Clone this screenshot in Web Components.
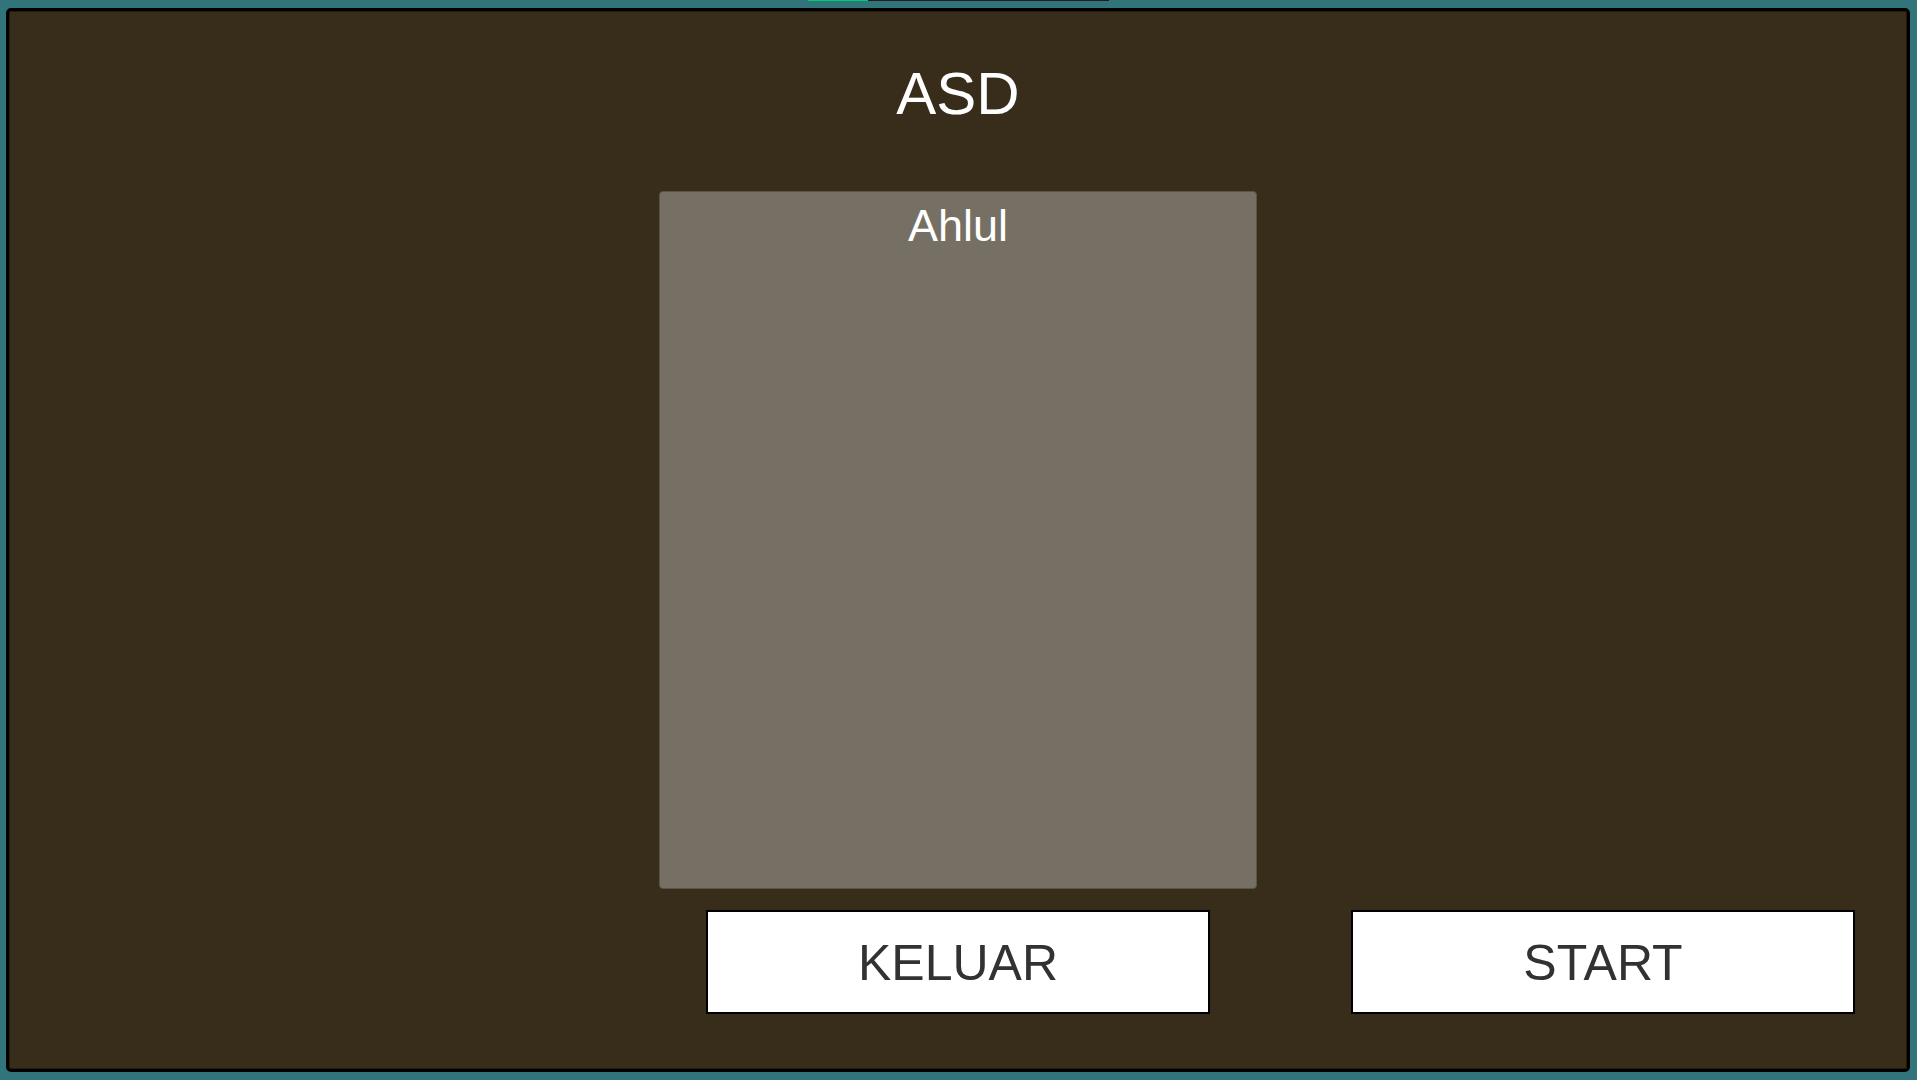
<!DOCTYPE html>
<html lang="id">
<head>
<meta charset="utf-8">
<meta name="viewport" content="width=device-width, initial-scale=1">
<title>Lobby</title>
<style>
html, body { margin: 0; }
body { background: #31747a; color: #fff; font-family: "Liberation Sans", Arial, sans-serif; }
</style>
</head>
<body>
<game-lobby>
  <load-bar slot="status"></load-bar>
  <span slot="title">ASD</span>
  <player-list>Ahlul</player-list>
  <game-button slot="leave">KELUAR</game-button>
  <game-button slot="start">START</game-button>
</game-lobby>
<script>
class Base extends HTMLElement {
  constructor() {
    super();
    this.attachShadow({ mode: "open" }).innerHTML = this.constructor.markup;
  }
}
customElements.define("load-bar", class extends Base {
  static markup = `<style>
    :host { display: block; width: 301px; height: 1px; background: #211e1f; margin: 0 auto; }
    div { width: 20%; height: 100%; background: #00cc6a; }
  </style><div></div>`;
});
customElements.define("player-list", class extends Base {
  static markup = `<style>
    :host { display: flex; flex: 1; width: 32%; min-width: 598px; box-sizing: border-box; border: 1px solid #5c5445; border-radius: 4px; background: #767064; }
    ul { flex: 1; list-style: none; margin: 0; padding: 9px 0; text-align: center; font-size: 45px; line-height: 50px; }
  </style><ul><li><slot></slot></li></ul>`;
});
customElements.define("game-button", class extends Base {
  static markup = `<style>
    :host { display: block; }
    button { display: block; width: 100%; height: 104px; margin: 0; padding: 1px 0 0; border: 2px solid #000; border-radius: 0; background: #fff; color: #323232; font: inherit; font-size: 50px; cursor: pointer; }
  </style><button type="button"><slot></slot></button>`;
});
customElements.define("game-lobby", class extends Base {
  static markup = `<style>
    :host { display: flex; flex-direction: column; box-sizing: border-box; min-height: 100vh; padding: 0 7px 8px 6px; }
    .status { height: 8px; }
    main { flex: 1; display: flex; flex-direction: column; align-items: center; border: 3px solid #000; border-radius: 5px; background: #382c1a; box-shadow: inset 0 0 0 1px #251c10; padding: 48px 52px 55px; }
    h1 { margin: 0 0 62px; font-size: 60px; line-height: 70px; font-weight: normal; }
    footer { align-self: stretch; display: grid; grid-template-columns: repeat(3, 1fr); column-gap: 141px; margin-top: 21px; }
    slot[name="leave"]::slotted(*) { grid-column: 2; }
    slot[name="start"]::slotted(*) { grid-column: 3; }
  </style>
  <div class="status"><slot name="status"></slot></div>
  <main>
    <h1><slot name="title"></slot></h1>
    <slot></slot>
    <footer><slot name="leave"></slot><slot name="start"></slot></footer>
  </main>`;
});
</script>
</body>
</html>
